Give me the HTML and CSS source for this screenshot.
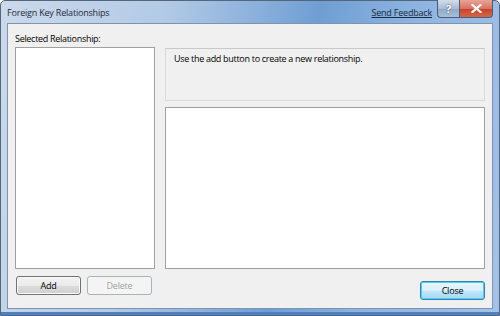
FILE: index.html
```html
<!DOCTYPE html>
<html lang="en">
<head>
    <meta charset="UTF-8">
    <title>Foreign Key Relationships</title>
    <link rel="stylesheet" href="styles.css">
</head>
<body>
    <div class="window">
        <div class="titlebar">
            <span class="title">Foreign Key Relationships</span>
            <a class="feedback" href="#">Send Feedback</a>
            <div class="caption-btns">
                <span class="cap-btn help">?</span>
                <span class="cap-btn close-x">
                    <svg width="11" height="9" viewBox="0 0 11 9">
                        <path d="M1.5 1 L9.5 8 M9.5 1 L1.5 8" stroke="#fff" stroke-width="2.2" stroke-linecap="square"/>
                    </svg>
                </span>
            </div>
        </div>

        <div class="client">
            <div class="main">
                <div class="left">
                    <div class="label">Selected Relationship:</div>
                    <div class="listbox"></div>
                    <div class="btn-row">
                        <button class="btn">Add</button>
                        <button class="btn" disabled>Delete</button>
                    </div>
                </div>
                <div class="right">
                    <div class="info">Use the add button to create a new relationship.</div>
                    <div class="grid"></div>
                    <div class="btn-row end">
                        <button class="btn default">Close</button>
                    </div>
                </div>
            </div>
        </div>
    </div>
</body>
</html>
```

FILE: styles.css
```css
* {
    margin: 0;
    padding: 0;
    box-sizing: border-box;
}

body {
    width: 500px;
    height: 316px;
    overflow: hidden;
    font-family: "Open Sans", "Noto Sans", sans-serif;
    font-size: 9px;
    letter-spacing: -0.3px;
    color: #000;
}

.window {
    width: 500px;
    height: 316px;
    display: flex;
    flex-direction: column;
    border: 1px solid #55657a;
    border-radius: 5px 5px 0 0;
    background: linear-gradient(100deg, #cbd9eb 0%, #b3cae5 30%, #6f9ed3 58%, #8db4e0 75%, #a3c2e7 100%);
    padding: 0 6px 6px 6px;
    box-shadow: inset 0 -3px 0 #4f7fbf;
}

.titlebar {
    height: 22px;
    display: flex;
    align-items: flex-start;
}

.title {
    padding: 5px 0 0 0;
    font-size: 9px;
    letter-spacing: -0.2px;
    color: #1e2a3a;
    flex: 1;
}

.feedback {
    padding-top: 5px;
    margin-right: 5px;
    color: #1a2a40;
    font-size: 9px;
    letter-spacing: -0.2px;
    text-decoration: underline;
}

.caption-btns {
    display: flex;
    margin-top: -1px;
}

.cap-btn {
    height: 18px;
    display: flex;
    align-items: center;
    justify-content: center;
    border: 1px solid #4d5d74;
    border-top: none;
}

.help {
    width: 22px;
    border-radius: 0 0 0 4px;
    border-right: none;
    background: linear-gradient(#d3deeb, #a8bcd4 50%, #8ea7c4 51%, #a7bfdc);
    color: #fff;
    font-weight: bold;
    font-size: 11px;
    text-shadow: 0 0 2px #35475f;
}

.close-x {
    width: 34px;
    border-radius: 0 0 4px 0;
    background: linear-gradient(#e8a598, #d9735f 50%, #c74126 51%, #d5674c);
}

.client {
    flex: 1;
    background: #f0f0f0;
    border: 1px solid #7f93ad;
    padding: 6px 7px 8px 7px;
}

.main {
    height: 100%;
    display: flex;
    gap: 10px;
}

.left {
    width: 140px;
    display: flex;
    flex-direction: column;
}

.label {
    height: 10px;
    line-height: 10px;
    margin: 4px 0 3px 0;
}

.listbox {
    flex: 1;
    background: #fff;
    border: 1px solid #a0a0a0;
}

.btn-row {
    display: flex;
    gap: 6px;
    padding: 7px 0 0 1px;
    height: 31px;
}

.btn-row.end {
    justify-content: flex-end;
    padding-top: 12px;
}

.btn {
    width: 65px;
    height: 19px;
    font-family: "Open Sans", "Noto Sans", sans-serif;
    font-size: 9px;
    letter-spacing: -0.2px;
    color: #000;
    border: 1px solid #707070;
    border-radius: 3px;
    background: linear-gradient(#f2f2f2, #ebebeb 50%, #dddddd 51%, #cfcfcf);
    box-shadow: inset 0 0 0 1px #fcfcfc;
}

.btn:disabled {
    color: #a0a0a0;
    border-color: #adb2b5;
    background: #f4f4f4;
    box-shadow: none;
}

.btn.default {
    border-color: #3c7fb1;
    background: linear-gradient(#eaf6fd, #d9f0fc 50%, #bee6fd 51%, #a7d9f5);
    box-shadow: inset 0 0 0 1px #48d1f6;
}

.right {
    flex: 1;
    display: flex;
    flex-direction: column;
    padding-top: 18px;
}

.info {
    height: 53px;
    border: 1px solid #dadada;
    border-top-color: #c8c8c8;
    background: #f0f0f0;
    padding: 3px 8px;
}

.grid {
    flex: 1;
    margin-top: 6px;
    background: #fff;
    border: 1px solid #a0a0a0;
}
```
